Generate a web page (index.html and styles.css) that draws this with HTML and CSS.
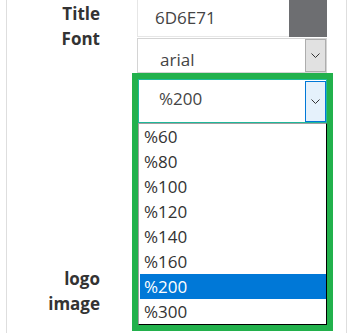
FILE: index.html
```html
<!DOCTYPE html>
<html>
    <head>
        <title>Title Font</title>
        <link rel="stylesheet" href="styles.css">
    </head>
    <body>
        <div class="panel">
            <div class="labels">
                <div class="label">Title<br>Font</div>
                <div class="label label-bottom">logo<br>image</div>
            </div>

            <div class="fields">
                <!-- colour -->
                <div class="color-field">
                    <div class="color-text">6D6E71</div>
                    <div class="swatch"></div>
                </div>

                <!-- font family -->
                <div class="select">
                    <div class="select-value">arial</div>
                    <div class="select-arrow">
                        <svg width="9" height="5" viewBox="0 0 9 5"><polyline points="0.5,0.5 4.5,4.5 8.5,0.5" fill="none" stroke="#333" stroke-width="1"/></svg>
                    </div>
                </div>

                <!-- font size, opened -->
                <div class="marker">
                    <div class="select select-open">
                        <div class="select-value">%200</div>
                        <div class="select-arrow">
                            <svg width="9" height="5" viewBox="0 0 9 5"><polyline points="0.5,0.5 4.5,4.5 8.5,0.5" fill="none" stroke="#333" stroke-width="1"/></svg>
                        </div>
                    </div>
                    <ul class="options">
                        <li>%60</li>
                        <li>%80</li>
                        <li>%100</li>
                        <li>%120</li>
                        <li>%140</li>
                        <li>%160</li>
                        <li class="selected">%200</li>
                        <li>%300</li>
                    </ul>
                </div>
            </div>
        </div>
    </body>
</html>
```

FILE: styles.css
```css
body {
    margin: 0;
    font-family: 'Open Sans', sans-serif;
    color: #333;
}

.panel {
    display: flex;
    margin-left: 6px;
    width: 341px;
    height: 333px;
    box-sizing: border-box;
    border-left: 1px solid #dedede;
    border-right: 1px solid #dedede;
}

.labels {
    display: flex;
    flex-direction: column;
    width: 94px;
    padding-right: 1px;
    box-sizing: border-box;
}

.label {
    font-size: 17px;
    font-weight: bold;
    line-height: 25px;
    text-align: right;
    padding-top: 1px;
    color: #333;
}

.label-bottom {
    margin-top: auto;
    padding-bottom: 17px;
}

.fields {
    margin-left: 36px;
    width: 190px;
    font-size: 17px;
}

.color-field {
    display: flex;
    height: 37px;
}

.color-text {
    width: 152px;
    box-sizing: border-box;
    padding-left: 17px;
    padding-bottom: 2px;
    line-height: 35px;
    border-left: 1px solid #e6e6e6;
    border-bottom: 1px solid #e6e6e6;
    color: #444;
}

.swatch {
    flex: 1;
    background-color: #6d6e71;
}

.select {
    display: flex;
    margin-top: 1px;
    height: 35px;
    box-sizing: border-box;
    border: 1px solid #d4d4d4;
    background: #fff;
}

.select-value {
    flex: 1;
    padding: 9px 0 0 22px;
    line-height: 23px;
    color: #444;
}

.select-arrow {
    display: flex;
    align-items: center;
    justify-content: center;
    width: 21px;
    box-sizing: border-box;
    border: 1px solid #adadad;
    background-color: #e1e1e1;
}

.marker {
    margin: 0 -6px 0 -5px;
    border: 6px solid #22b14c;
}

.select-open {
    margin-top: 0;
    height: 44px;
    padding: 1px 0 0 0;
    border-color: #1fb89a;
}

.select-open .select-value {
    padding: 6px 0 0 20px;
}

.select-open .select-arrow {
    border-color: #0078d7;
    background-color: #e5f1fb;
}

.options {
    list-style: none;
    margin: 0;
    padding: 0 0 0 1px;
    border: 1px solid #a0a0a0;
    border-right-color: #000;
    border-bottom-color: #000;
    background: #fff;
}

.options li {
    height: 25px;
    line-height: 25px;
    padding-left: 4px;
    color: #333;
}

.options li.selected {
    background-color: #0078d7;
    color: #fff;
}
```
